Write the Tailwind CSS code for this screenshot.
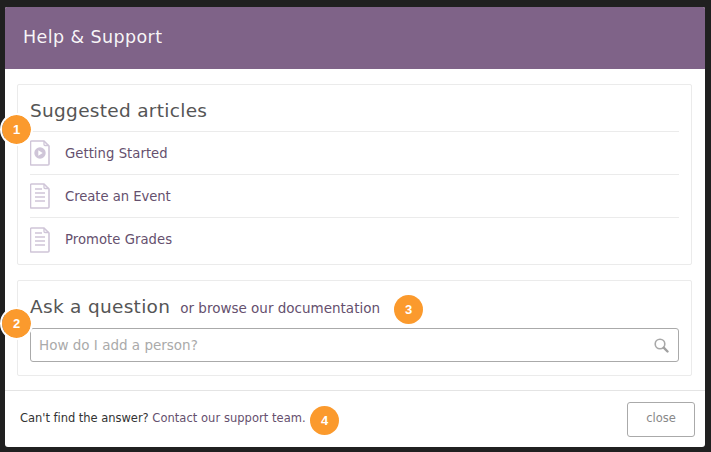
<!DOCTYPE html>
<html><head><meta charset="utf-8">
<script src="https://cdn.jsdelivr.net/npm/@tailwindcss/browser@4"></script>
</head>
<body class="w-[711px] h-[452px] overflow-hidden bg-[#202020] font-['DejaVu_Sans',sans-serif]">
<div class="pt-[7px] pl-[5px]">
<div class="relative w-[700px] h-[440px] bg-white rounded-b-[3px] rounded-t-[2px] flex flex-col">
  <div class="h-[62px] bg-[#7f6388] rounded-t-[2px] flex items-center pl-[18px] pb-[2px] shrink-0">
    <h1 class="text-[17.500px] tracking-[0.4px] text-white/95 font-normal">Help &amp; Support</h1>
  </div>
  <div class="pl-[12px] pr-[13px] pt-[15px]">
    <section class="h-[181px] border border-[#ebebeb] rounded-[2px] px-[12px]">
      <h2 class="h-[47px] pt-[14px] text-[18.500px] tracking-[0.3px] leading-[24px] text-[#555] font-normal border-b border-[#ebebeb]">Suggested articles</h2>
      <div class="h-[43px] flex items-center border-b border-[#ebebeb]">
        <svg width="20" height="26" viewBox="0 0 20 26" class="shrink-0 mr-[15px]" fill="none"><path d="M1.500 1h12.500l5 5v18a1 1 0 0 1-1 1H1.500a1 1 0 0 1-1-1V2a1 1 0 0 1 1-1z" stroke="#cfc5d8" stroke-width="1.600"/><path d="M14 1v3.500a1 1 0 0 0 1 1h4" stroke="#cfc5d8" stroke-width="1.300"/><circle cx="10" cy="13" r="5.700" fill="#cfc5d8"/><path d="M8.300 10.300v5.400l4.400-2.700z" fill="#fff"/></svg>
        <a class="pt-[2px] text-[13.200px] tracking-[0.05px] text-[#65506e]">Getting Started</a>
      </div>
      <div class="h-[43px] flex items-center border-b border-[#ebebeb]">
        <svg width="20" height="26" viewBox="0 0 20 26" class="shrink-0 mr-[15px]" fill="none"><path d="M1.500 1h12.500l5 5v18a1 1 0 0 1-1 1H1.500a1 1 0 0 1-1-1V2a1 1 0 0 1 1-1z" stroke="#cfc5d8" stroke-width="1.600"/><path d="M14 1v3.500a1 1 0 0 0 1 1h4" stroke="#cfc5d8" stroke-width="1.300"/><path d="M5 6h7M5 10h10M5 14h10M5 18h10" stroke="#cfc5d8" stroke-width="1.400"/></svg>
        <a class="pt-[2px] text-[13.200px] tracking-[-0.05px] text-[#65506e]">Create an Event</a>
      </div>
      <div class="h-[43px] flex items-center">
        <svg width="20" height="26" viewBox="0 0 20 26" class="shrink-0 mr-[15px]" fill="none"><path d="M1.500 1h12.500l5 5v18a1 1 0 0 1-1 1H1.500a1 1 0 0 1-1-1V2a1 1 0 0 1 1-1z" stroke="#cfc5d8" stroke-width="1.600"/><path d="M14 1v3.500a1 1 0 0 0 1 1h4" stroke="#cfc5d8" stroke-width="1.300"/><path d="M5 6h7M5 10h10M5 14h10M5 18h10" stroke="#cfc5d8" stroke-width="1.400"/></svg>
        <a class="text-[13.200px] tracking-[0.05px] text-[#65506e]">Promote Grades</a>
      </div>
    </section>
    <section class="mt-[15px] h-[96px] border border-[#ebebeb] rounded-[2px] px-[12px] pt-[14px]">
      <div class="flex items-baseline h-[33px]">
        <h2 class="text-[18.500px] tracking-[0.3px] leading-[24px] text-[#555] font-normal">Ask a question</h2>
        <a class="ml-[10px] text-[13.500px] text-[#65506e]">or browse our documentation</a>
      </div>
      <div class="h-[34px] border border-[#aaa] rounded-[3px] flex items-center justify-between pl-[8px] pr-[9px]">
        <span class="text-[13.500px] text-[#aaa]">How do I add a person?</span>
        <svg width="15" height="15" viewBox="0 0 15 15" fill="none"><circle cx="6" cy="6" r="4.800" stroke="#a8a8a8" stroke-width="1.600"/><path d="M9.700 9.700l3.800 3.800" stroke="#a0a0a0" stroke-width="2.400" stroke-linecap="round"/></svg>
      </div>
    </section>
  </div>
  <div class="mt-[14px] flex-1 border-t border-[#e4e4e4] flex items-center justify-between pl-[15px] pr-[10px]">
    <p class="text-[11.500px] tracking-[-0.03px] text-[#333]">Can't find the answer? <a class="text-[#65506e] tracking-[0.04px]">Contact our support team.</a></p>
    <button class="w-[68px] h-[35px] border border-[#aaa] rounded-[3px] text-[11.500px] text-[#888] bg-white">close</button>
  </div>
  <span class="absolute left-[-3px] top-[108px] w-[29px] h-[29px] rounded-full bg-[#fb9a2d] outline-2 outline-white text-white font-bold text-[13px] flex items-center justify-center font-['Liberation_Sans',sans-serif]">1</span>
  <span class="absolute left-[-3px] top-[302px] w-[29px] h-[29px] rounded-full bg-[#fb9a2d] outline-2 outline-white text-white font-bold text-[13px] flex items-center justify-center font-['Liberation_Sans',sans-serif]">2</span>
  <span class="absolute left-[389px] top-[288px] w-[29px] h-[29px] rounded-full bg-[#fb9a2d] text-white font-bold text-[13px] flex items-center justify-center font-['Liberation_Sans',sans-serif]">3</span>
  <span class="absolute left-[305px] top-[399px] w-[29px] h-[29px] rounded-full bg-[#fb9a2d] text-white font-bold text-[13px] flex items-center justify-center font-['Liberation_Sans',sans-serif]">4</span>
</div>
</div>
</body></html>
